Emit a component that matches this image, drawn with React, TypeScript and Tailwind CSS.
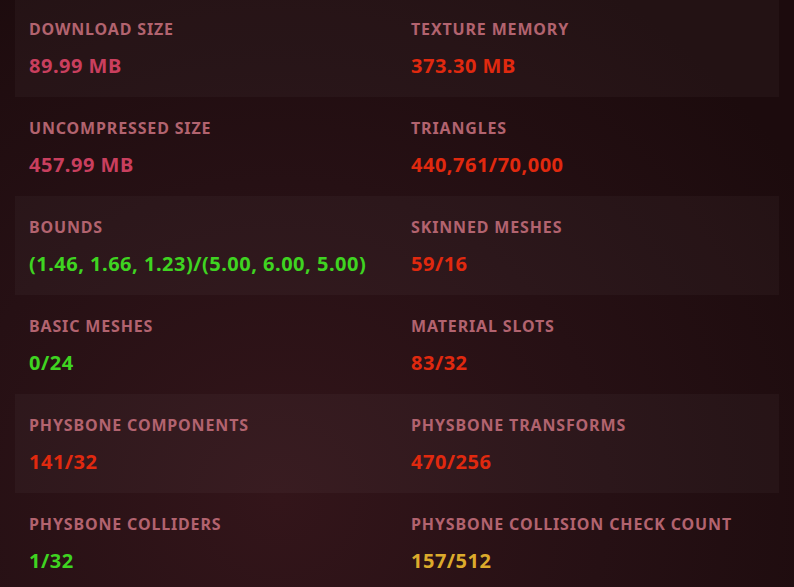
import React from 'react';

type Stat = {
  label: string;
  value: string;
  tone: 'pink' | 'red' | 'green' | 'yellow';
};

const toneClass: Record<Stat['tone'], string> = {
  pink: 'text-[#c93f5e]',
  red: 'text-[#e0290f]',
  green: 'text-[#3fd421]',
  yellow: 'text-[#dcab2c]',
};

const rows: [Stat, Stat][] = [
  [
    { label: 'Download Size', value: '89.99 MB', tone: 'pink' },
    { label: 'Texture Memory', value: '373.30 MB', tone: 'red' },
  ],
  [
    { label: 'Uncompressed Size', value: '457.99 MB', tone: 'pink' },
    { label: 'Triangles', value: '440,761/70,000', tone: 'red' },
  ],
  [
    { label: 'Bounds', value: '(1.46, 1.66, 1.23)/(5.00, 6.00, 5.00)', tone: 'green' },
    { label: 'Skinned Meshes', value: '59/16', tone: 'red' },
  ],
  [
    { label: 'Basic Meshes', value: '0/24', tone: 'green' },
    { label: 'Material Slots', value: '83/32', tone: 'red' },
  ],
  [
    { label: 'PhysBone Components', value: '141/32', tone: 'red' },
    { label: 'PhysBone Transforms', value: '470/256', tone: 'red' },
  ],
  [
    { label: 'PhysBone Colliders', value: '1/32', tone: 'green' },
    { label: 'PhysBone Collision Check Count', value: '157/512', tone: 'yellow' },
  ],
];

function StatCell({ stat }: { stat: Stat }) {
  return (
    <div className="px-[14px] pt-[21px]">
      <div className="text-[16px] leading-[20px] font-bold uppercase tracking-[0.85px] text-[#b2636f]">
        {stat.label}
      </div>
      <div className={`mt-[13px] text-[20px] leading-[28px] font-bold tracking-[0.5px] ${toneClass[stat.tone]}`}>
        {stat.value}
      </div>
    </div>
  );
}

export default function App() {
  return (
    <div
      className="h-[587px] w-[794px] overflow-hidden bg-[radial-gradient(ellipse_at_35%_85%,#33151a_0%,#261014_45%,#1c0b0d_85%)] px-[15px]"
      style={{ fontFamily: '"Noto Sans", "Open Sans", sans-serif' }}
    >
      <div className="-mt-[2px] flex flex-col">
        {rows.map((pair, i) => (
          <div
            key={i}
            className={`grid h-[99px] grid-cols-2 ${i % 2 === 0 ? 'bg-[#ffffff08]' : ''}`}
          >
            <StatCell stat={pair[0]} />
            <StatCell stat={pair[1]} />
          </div>
        ))}
      </div>
    </div>
  );
}
